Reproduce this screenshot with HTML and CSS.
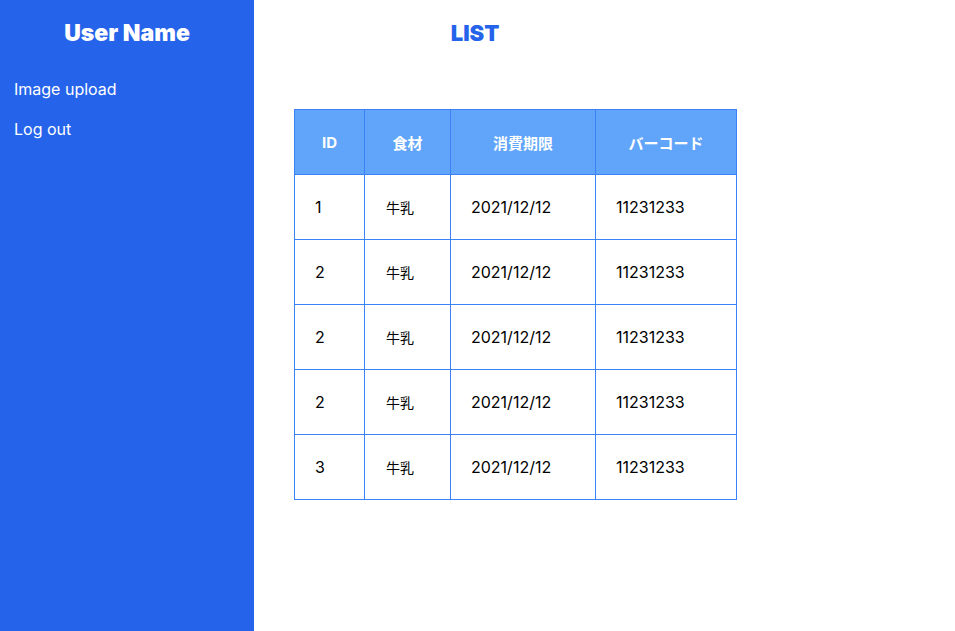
FILE: index.html
```html
<!DOCTYPE html>
<html lang="ja">
<head>
    <meta charset="UTF-8">
    <meta name="viewport" content="width=device-width, initial-scale=1.0">
    <title>List</title>
    <link rel="stylesheet" href="styles.css">
</head>
<body>

<div class="sidebar">
    <h2 class="user-name">User Name</h2>
    <a href="#" class="side-link">Image upload</a>
    <a href="#" class="side-link">Log out</a>
</div>

<div class="main">
    <h1 class="page-title">LIST</h1>
    <table class="food-table">
        <thead>
            <tr>
                <th class="col-id">ID</th>
                <th class="col-food">食材</th>
                <th class="col-date">消費期限</th>
                <th class="col-code">バーコード</th>
            </tr>
        </thead>
        <tbody>
            <tr><td>1</td><td class="food">牛乳</td><td>2021/12/12</td><td>11231233</td></tr>
            <tr><td>2</td><td class="food">牛乳</td><td>2021/12/12</td><td>11231233</td></tr>
            <tr><td>2</td><td class="food">牛乳</td><td>2021/12/12</td><td>11231233</td></tr>
            <tr><td>2</td><td class="food">牛乳</td><td>2021/12/12</td><td>11231233</td></tr>
            <tr><td>3</td><td class="food">牛乳</td><td>2021/12/12</td><td>11231233</td></tr>
        </tbody>
    </table>
</div>

</body>
</html>
```

FILE: styles.css
```css
html, body {
    height: 100%;
    margin: 0;
    padding: 0;
}

body {
    display: flex;
    font-family: Inter, "Noto Sans CJK JP", sans-serif;
    background-color: #fff;
    color: #000;
}

.sidebar {
    width: 254px;
    flex-shrink: 0;
    background-color: #2563eb;
    display: flex;
    flex-direction: column;
    padding: 0 14px;
    box-sizing: border-box;
}

.user-name {
    margin: 19px 0 32px;
    text-align: center;
    color: #fff;
    font-size: 23px;
    font-weight: 900;
    line-height: 28px;
}

.side-link {
    color: #fff;
    text-decoration: none;
    font-size: 16px;
    line-height: 20px;
    margin-bottom: 20px;
}

.main {
    flex: 1;
    padding-left: 40px;
}

.page-title {
    width: 362px;
    margin: 19px 0 62px;
    text-align: center;
    color: #2563eb;
    font-size: 22px;
    font-weight: 900;
    line-height: 28px;
}

.food-table {
    border-collapse: collapse;
    border: 1px solid #3b82f6;
}

.food-table th,
.food-table td {
    border: 1px solid #3b82f6;
    height: 65px;
    padding: 0 20px;
    box-sizing: border-box;
}

.food-table th {
    background-color: #60a5fa;
    color: #fff;
    font-size: 15px;
    font-weight: 700;
    text-align: center;
}

.food-table td {
    font-size: 16px;
    text-align: left;
}

.food-table td.food {
    font-size: 14px;
    padding-left: 21px;
}

.col-id { width: 70px; }
.col-food { width: 86px; }
.col-date { width: 145px; }
.col-code { width: 141px; }
```
